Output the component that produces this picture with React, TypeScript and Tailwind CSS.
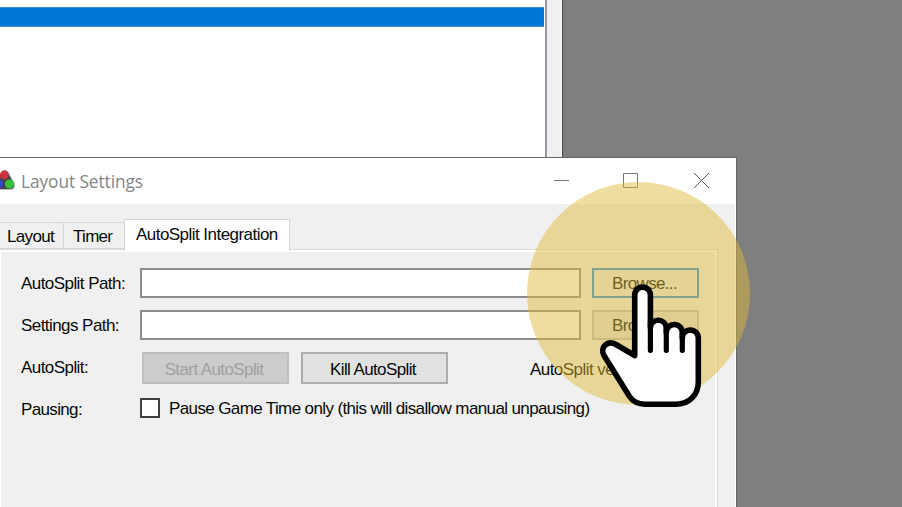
import type { ReactNode } from "react";

const ui = "font-['Liberation_Sans',Arial,sans-serif] text-[17px] leading-[20px] whitespace-nowrap";

function Row({ label, children, tracking }: { label: string; children: ReactNode; tracking: string }) {
  return (
    <div className="flex h-[42px] items-start">
      <div className={`w-[120px] shrink-0 pt-[6px] pl-px ${tracking}`}>{label}</div>
      {children}
    </div>
  );
}

function PathField() {
  return <div className="h-[30px] w-[441px] shrink-0 border-2 border-[#8c8c8c] bg-white" />;
}

function AppIcon() {
  return (
    <svg className="-mt-[2px] h-[24px] w-[16px] shrink-0" viewBox="0 0 16 24">
      <path d="M-6 19 L1 5 Q4 0 8 4 L14.5 16 Q15 21.5 10 21.5 H-1 Z" fill="#44424a" stroke="#b9b9b9" strokeWidth="1" />
      <circle cx="4.3" cy="7" r="4.4" fill="#cc333c" />
      <circle cx="9.5" cy="16" r="4.6" fill="#35c135" />
      <circle cx="-1.5" cy="16" r="4.6" fill="#3446ca" />
    </svg>
  );
}

function LayoutEditor() {
  return (
    <div className="absolute top-0 left-0 flex h-[158px] w-[563px] border-r border-[#454545] bg-[#f0f0f0]">
      <div className="h-full w-[547px] border-r-2 border-[#9699a4] bg-white pt-[7px]">
        <div className="h-[20px] w-[544px] border-y border-[#3d91dc] bg-[#0078d7]" />
      </div>
      <div className="ml-auto w-px bg-white" />
    </div>
  );
}

function TitleBar() {
  return (
    <div className="flex h-[46px] items-center bg-white">
      <AppIcon />
      <div className="ml-[5px] w-[533px] pt-[2px] font-['Open_Sans','Noto_Sans',sans-serif] text-[17.3px] leading-[24px] tracking-[-0.07px] whitespace-nowrap text-[#858585]">
        Layout Settings
      </div>
      <svg className="-mt-[2px] h-[24px] w-[170px]" viewBox="554 168 170 24" fill="none" stroke="#777" strokeWidth="1">
        <path d="M554 180.5H569" />
        <path d="M623.5 173.5H637.5V187.5H623.5Z" />
        <path d="M694 173L709 188M709 173L694 188" stroke="#555" />
      </svg>
    </div>
  );
}

function Tabs() {
  return (
    <div className="relative z-10 -mb-[2px] flex h-[32px] items-end">
      <div className="flex h-[31px] w-[64px] pb-[2px]">
        <div className="mt-[2px] w-full border-y border-r border-[#d6d6d6] pt-[4px] pl-[7px] tracking-[-0.65px]">Layout</div>
      </div>
      <div className="flex h-[31px] w-[60px] pb-[2px]">
        <div className="mt-[2px] w-full border-y border-[#d6d6d6] pt-[4px] pl-[9px] tracking-[-0.7px]">Timer</div>
      </div>
      <div className="flex h-[32px] w-[166px] border-x border-t border-[#d6d6d6] bg-white pt-[5px] pl-[11px] tracking-[-0.54px]">
        AutoSplit Integration
      </div>
    </div>
  );
}

function SettingsWindow() {
  return (
    <div className="absolute top-[157px] left-0 h-[350px] w-[737px] overflow-hidden border-t border-r border-[#666] bg-[#f0f0f0]">
      <div className="h-full border-r border-white">
        <TitleBar />
        <div className={`${ui} pt-[15px] text-[#080808]`}>
          <Tabs />
          <div className="h-[270px] w-[718px] border-t border-r border-[#dcdcdc]">
            <div className="h-full border-t-2 border-r-2 border-l border-white pt-[16px] pl-[19px]">
              <Row label="AutoSplit Path:" tracking="tracking-[-0.56px]">
                <PathField />
                <div className="ml-[11px] h-[30px] w-[107px] border-2 border-[#2c8cd8] bg-[#e6eaee] pt-[4px] pl-[18px] tracking-[-0.65px]">Browse...</div>
              </Row>
              <Row label="Settings Path:" tracking="tracking-[-0.56px]">
                <PathField />
                <div className="ml-[11px] h-[30px] w-[107px] border-2 border-[#bcbcbc] bg-[#e1e1e1] pt-[4px] pl-[18px] tracking-[-0.65px]">Browse...</div>
              </Row>
              <Row label="AutoSplit:" tracking="tracking-[-0.56px]">
                <div className="ml-[2px] h-[32px] w-[147px] border-2 border-[#bfbfbf] bg-[#ccc] pt-[6px] pr-[3px] text-center tracking-[-0.6px] text-[#a0a0a0]">Start AutoSplit</div>
                <div className="ml-[12px] h-[32px] w-[147px] border-2 border-[#adadad] bg-[#e1e1e1] pt-[6px] pr-[3px] text-center tracking-[-0.62px]">Kill AutoSplit</div>
                <div className="ml-[82px] pt-[8px] tracking-[-0.55px]">AutoSplit version</div>
              </Row>
              <Row label="Pausing:" tracking="tracking-[-0.65px]">
                <div className="mt-[4px] h-[20px] w-[20px] border-2 border-[#404040] bg-white" />
                <div className="ml-[9px] pt-[5px] tracking-[-0.62px]">Pause Game Time only (this will disallow manual unpausing)</div>
              </Row>
            </div>
          </div>
        </div>
      </div>
    </div>
  );
}

function ClickPointer() {
  return (
    <svg className="absolute top-[180px] left-[525px] h-[230px] w-[230px]" viewBox="525 180 230 230">
      <circle cx="638.5" cy="293.5" r="111.5" fill="#e0ba39" fillOpacity="0.48" />
      <g stroke="#000" strokeLinecap="round" strokeLinejoin="round">
        <path
          strokeWidth="5.6"
          d="M634.7 355.5V295A7.85 7.85 0 0 1 650.4 295V327.3A8 8 0 0 1 666.3 327.3V332.5A8 8 0 0 1 682.3 332.5V338A8 8 0 0 1 698.3 338V382C698.3 395 689 404.2 676 404.2H645C638 404.2 633 401.5 629.5 396.5L604 355.5C599.5 347.5 607.5 339.5 616 344.5Z"
          fill="#fff"
        />
        <path strokeWidth="5.2" d="M650.4 322V350.3M666.3 328V350.3M682.3 334V350.3" fill="none" />
      </g>
    </svg>
  );
}

export default function App() {
  return (
    <div className="relative h-[507px] w-[902px] overflow-hidden bg-[#7f7f7f]">
      <LayoutEditor />
      <SettingsWindow />
      <ClickPointer />
    </div>
  );
}
